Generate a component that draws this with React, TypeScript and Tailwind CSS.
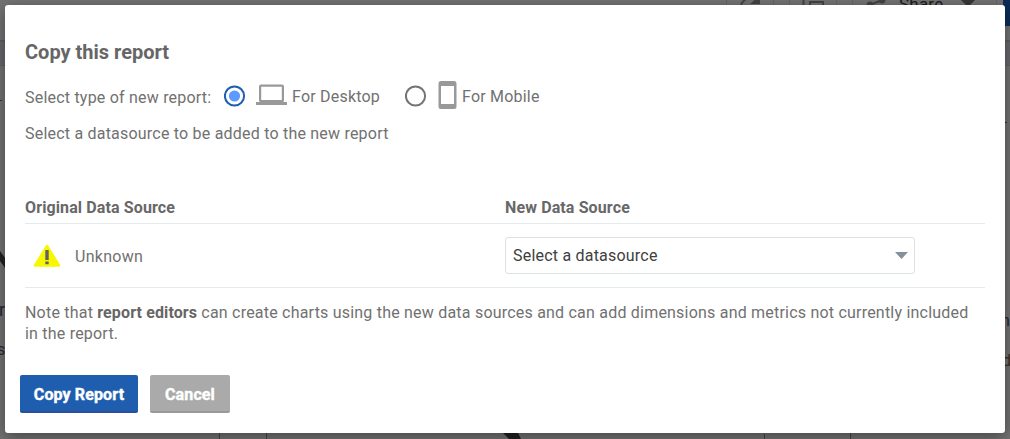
import React from "react";

function Backdrop() {
  return (
    <div className="absolute inset-0 overflow-hidden bg-[#737373]" aria-hidden="true">
      <div className="absolute inset-x-0 top-10 h-[26px] border-t-2 border-b border-t-[#5b6066] border-b-[#626262] bg-[#68686d]" />
      <div className="absolute top-0 right-0 h-[26px] w-[7px] bg-[#0b2c58]" />
      <svg className="absolute inset-0 h-full w-full" viewBox="0 0 1010 439" fill="none">
        <path d="M726.5 0v6M773.5 0v6M789.5 0v6M836.5 0v6M852.5 0v6M996.5 0v6" stroke="#666" />
        <path d="M741 6c0-3 2-5 5-7" stroke="#444" strokeWidth="2" />
        <path d="M750 4h10V-5z" fill="#444" />
        <path d="M803.5 0v7M810 7V2h13v5" stroke="#444" strokeWidth="2" />
        <circle cx="870" cy="5" r="3.5" fill="#444" />
        <circle cx="882" cy="0" r="3.5" fill="#444" />
        <path d="M870 5l12-5" stroke="#444" strokeWidth="2" />
        <path d="M961 0h14l-7 7z" fill="#363636" />
        <path d="M-3 247L8 262v10L-3 257z" fill="#222" />
        <path d="M501 431h16l5 10h-11z" fill="#222" />
        <path d="M219.500 433v6M266.500 433v6M764.500 434v5M850.500 433v6" stroke="#444" />
        <path d="M0 100.500h2M1005 122.500h2" stroke="#333" />
      </svg>
      <span className="absolute top-[-6px] left-[899px] font-['Roboto'] text-[17px] leading-5 text-[#1c1c1c]">Share</span>
      <span className="absolute top-[300px] left-[-1px] font-['Roboto'] text-lg leading-5 text-[#20283a]">r</span>
      <span className="absolute top-[340px] left-[-3px] font-['Roboto'] text-base leading-5 text-[#252a32]">s</span>
      <span className="absolute top-[311px] left-[1001px] font-['Roboto'] text-base leading-5 text-[#252a32]">n</span>
      <span className="absolute top-[351px] left-[1002px] font-['Roboto'] text-base leading-5 text-[#3c2d20]">d</span>
    </div>
  );
}

function Radio({ checked }: { checked?: boolean }) {
  return (
    <svg className="mt-0.5 h-[22px] w-[22px] shrink-0" viewBox="0 0 22 22" fill="none">
      <circle cx="10.5" cy="11" r="9.6" stroke={checked ? "#1f5fae" : "#747474"} strokeWidth="2" />
      {checked && <circle cx="10.5" cy="11" r="5.6" fill="#5c9aff" />}
    </svg>
  );
}

function LaptopIcon() {
  return (
    <svg className="h-[22px] w-[31px] shrink-0" viewBox="0 0 31 22">
      <path
        fill="#999"
        fillRule="evenodd"
        d="M5 .5h21a2 2 0 0 1 2 2v14a2 2 0 0 1-1 1.500h4v3H0v-3h4a2 2 0 0 1-1-1.500v-14a2 2 0 0 1 2-2zM5.200 2.700V16h20.600V2.700z"
      />
    </svg>
  );
}

function PhoneIcon() {
  return (
    <svg className="h-7 w-[19px] shrink-0" viewBox="0 0 19 28">
      <path
        fill="#999"
        fillRule="evenodd"
        d="M3 0h13a2.500 2.500 0 0 1 2.500 2.500v23A2.500 2.500 0 0 1 16 28H3a2.500 2.500 0 0 1-2.500-2.500v-23A2.500 2.500 0 0 1 3 0zM3 5v18h13V5z"
      />
    </svg>
  );
}

function WarningIcon() {
  return (
    <svg className="h-[23px] w-[28px] shrink-0" viewBox="0 0 28 23">
      <path d="M14 2L26 21.500H2z" fill="#f7f700" stroke="#f7f700" strokeWidth="2.500" strokeLinejoin="round" />
      <path d="M12.300 6h3.400v10h-3.400zM12.300 17.500h3.400v2.800h-3.400z" fill="#626262" />
    </svg>
  );
}

export default function App() {
  return (
    <div className="relative flex h-[439px] w-[1010px] overflow-hidden p-[5px] pb-1.5 font-['Roboto',sans-serif] text-base leading-[21px] tracking-[0.21px] text-[#717171]">
      <Backdrop />
      <div
        role="dialog"
        className="relative flex flex-1 flex-col rounded-[3px] bg-white px-5 pt-[34px] shadow-[0_4px_16px_rgba(0,0,0,0.4)]"
      >
        <h1 className="h-[26px] text-xl leading-[26px] font-bold tracking-normal text-[#666]">Copy this report</h1>

        <div className="mt-4 flex h-7 items-center">
          <span className="w-[198.5px] pt-1">Select type of new report:</span>
          <label className="flex items-center">
            <Radio checked />
            <span className="ml-[10.500px]"><LaptopIcon /></span>
            <span className="ml-[5px] w-[113px] pt-0.5">For Desktop</span>
          </label>
          <label className="flex items-center">
            <Radio />
            <span className="ml-[11px]"><PhoneIcon /></span>
            <span className="ml-[5px] pt-0.5">For Mobile</span>
          </label>
        </div>

        <p className="mt-3.5">Select a datasource to be added to the new report</p>

        <div className="mt-[53px] grid h-[27px] grid-cols-2 border-b border-[#e3ebec] font-bold tracking-[0.12px] text-[#686868]">
          <span>Original Data Source</span>
          <span>New Data Source</span>
        </div>
        <div className="grid h-16 grid-cols-2 items-center border-b border-[#e3ebec]">
          <div className="flex items-center">
            <span className="ml-2"><WarningIcon /></span>
            <span className="ml-3.5 pt-0.5 tracking-[0.3px]">Unknown</span>
          </div>
          <button className="flex h-[37px] w-[410px] items-center justify-between rounded-[3px] border border-[#dde1e3] pr-1.5 pl-[7px] text-left text-[#404040]">
            <span>Select a datasource</span>
            <svg className="h-[7px] w-[13px]" viewBox="0 0 13 7">
              <path d="M0 0h13L6.500 7z" fill="#85919a" />
            </svg>
          </button>
        </div>

        <p className="mt-3.5">
          Note that <b className="font-bold tracking-[0.12px] text-[#666]">report editors</b> can create charts using the new data sources and can add dimensions and metrics not currently included in the report.
        </p>

        <div className="mt-[31px] -ml-[5px] flex gap-3 tracking-[0.12px]">
          <button className="h-[38px] w-[118px] rounded-[2px] border-b-2 border-[#2d4f9a] bg-[#1f5eae] pt-0.5 font-bold text-white [-webkit-text-stroke:0.4px_white]">Copy Report</button>
          <button className="h-[38px] w-20 rounded-[2px] border-b-2 border-[#999] bg-[#aaa] pt-0.5 font-bold text-white [-webkit-text-stroke:0.4px_white]">Cancel</button>
        </div>
      </div>
    </div>
  );
}
